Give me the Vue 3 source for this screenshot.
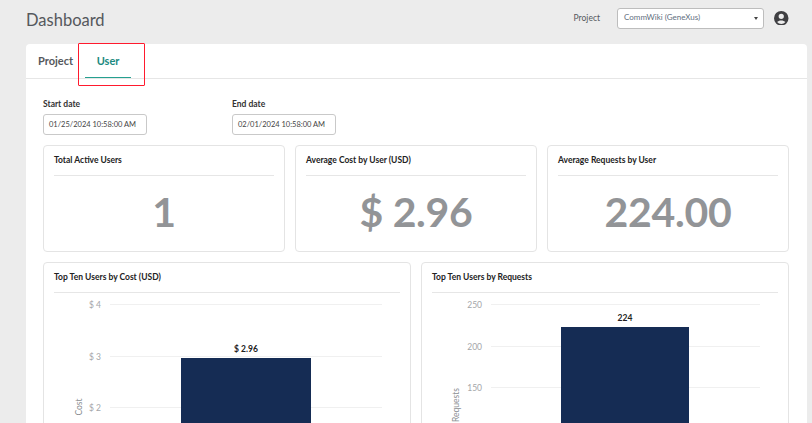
<script setup>
const stats = [
  { title: "Total Active Users", value: "1" },
  { title: "Average Cost by User (USD)", value: "$ 2.96" },
  { title: "Average Requests by User", value: "224.00" },
]

// coordinates are relative to the svg, which starts under the card's title line
const charts = [
  {
    title: "Top Ten Users by Cost (USD)",
    axis: "Cost",
    axisX: 28,
    axisY: 114,
    tickX: 47,
    gridFrom: 56,
    gridTo: 328,
    ticks: [
      { label: "$ 4", y: 11 },
      { label: "$ 3", y: 63 },
      { label: "$ 2", y: 114 },
    ],
    bar: { x: 127, y: 65, width: 130, label: "$ 2.96" },
  },
  {
    title: "Top Ten Users by Requests",
    axis: "Requests",
    axisX: 27,
    axisY: 112,
    tickX: 50,
    gridFrom: 59,
    gridTo: 328,
    ticks: [
      { label: "250", y: 11 },
      { label: "200", y: 53 },
      { label: "150", y: 94 },
    ],
    bar: { x: 129, y: 34, width: 128, label: "224" },
  },
]
</script>

<template>
  <div class="page">
    <header class="top-bar">
      <h1>Dashboard</h1>
      <div class="top-right">
        <label class="project-label">Project</label>
        <div class="project-select">
          <span>CommWiki (GeneXus)</span>
          <i class="caret"></i>
        </div>
        <svg class="user-icon" width="14.5" height="14.5" viewBox="0 0 16 16">
          <path
            fill="#3f3f42"
            fill-rule="evenodd"
            d="M8 0a8 8 0 1 1 0 16A8 8 0 0 1 8 0zm0 3a2.9 2.9 0 1 0 0 5.8A2.9 2.9 0 0 0 8 3zm0 7.4c-1.9 0-3.6.6-4.6 1.7a6 6 0 0 0 9.2 0c-1-1.1-2.7-1.7-4.6-1.7z"
          />
        </svg>
      </div>
    </header>

    <main class="panel">
      <nav class="tabs">
        <a class="tab">Project</a>
        <a class="tab active">User</a>
        <div class="highlight"></div>
      </nav>

      <div class="content">
        <div class="dates">
          <div class="date-field">
            <label>Start date</label>
            <div class="date-input">01/25/2024 10:58:00 AM</div>
          </div>
          <div class="date-field">
            <label>End date</label>
            <div class="date-input">02/01/2024 10:58:00 AM</div>
          </div>
        </div>

        <div class="stats">
          <section v-for="stat in stats" :key="stat.title" class="card stat-card">
            <h2>{{ stat.title }}</h2>
            <div class="stat-value">{{ stat.value }}</div>
          </section>
        </div>

        <div class="charts">
          <section v-for="chart in charts" :key="chart.title" class="card chart-card">
            <h2>{{ chart.title }}</h2>
            <svg class="chart" width="347" height="140">
              <g v-for="tick in chart.ticks" :key="tick.label">
                <line
                  :x1="chart.gridFrom"
                  :x2="chart.gridTo"
                  :y1="tick.y + 0.5"
                  :y2="tick.y + 0.5"
                  stroke="#f0f0f0"
                />
                <text class="tick" :x="chart.tickX" :y="tick.y + 3.5" text-anchor="end">
                  {{ tick.label }}
                </text>
              </g>
              <rect :x="chart.bar.x" :y="chart.bar.y" :width="chart.bar.width" height="100" fill="#152c54" />
              <text class="bar-label" :x="chart.bar.x + chart.bar.width / 2" :y="chart.bar.y - 6" text-anchor="middle">
                {{ chart.bar.label }}
              </text>
              <text
                class="axis-title"
                text-anchor="middle"
                :transform="`translate(${chart.axisX} ${chart.axisY}) rotate(-90)`"
              >
                {{ chart.axis }}
              </text>
            </svg>
          </section>
        </div>
      </div>
    </main>
  </div>
</template>

<style scoped>
.page {
  height: 423px;
  overflow: hidden;
  padding: 0 5px 0 26px;
  background: #ececec;
  font-family: Lato, "Noto Sans", sans-serif;
  color: #333;
  box-sizing: border-box;
}

.top-bar {
  display: flex;
  align-items: center;
  justify-content: space-between;
  height: 44px;
  padding-right: 18.5px;
  box-sizing: border-box;
}

.top-bar h1 {
  margin: 0 0 5px;
  font-size: 16.5px;
  font-weight: 400;
  color: #55585c;
}

.top-right {
  display: flex;
  align-items: center;
  padding-bottom: 8px;
}

.project-label {
  margin-right: 17px;
  font-size: 8.5px;
  color: #55585c;
}

.project-select {
  display: flex;
  align-items: center;
  justify-content: space-between;
  width: 147px;
  height: 21px;
  margin-right: 10px;
  padding: 0 5px 2px 6px;
  border: 1px solid #bdbdbd;
  border-radius: 3px;
  background: #fff;
  box-sizing: border-box;
  font-size: 8px;
  color: #5f6f80;
}

.caret {
  width: 0;
  height: 0;
  border-left: 2px solid transparent;
  border-right: 2px solid transparent;
  border-top: 3px solid #444;
  margin-top: 2px;
}

.panel {
  height: 400px;
  border-radius: 4px 4px 0 0;
  background: #fff;
}

.tabs {
  position: relative;
  display: flex;
  height: 35px;
  padding-left: 12px;
  border-bottom: 1px solid #e6e6e6;
  box-sizing: border-box;
}

.tab {
  display: flex;
  align-items: center;
  justify-content: center;
  height: 34px;
  padding-bottom: 1px;
  font-size: 11px;
  font-weight: 700;
  color: #55585c;
  box-sizing: border-box;
}

.tab.active {
  width: 46px;
  margin-left: 12px;
  padding-bottom: 0;
  color: #1b8a80;
  border-bottom: 1px solid #25a090;
}

.highlight {
  position: absolute;
  left: 52px;
  top: -1px;
  width: 67px;
  height: 43px;
  border: 1.5px solid #ff1a2e;
  border-radius: 1px;
  box-sizing: border-box;
}

.content {
  padding: 19px 18px 0 17px;
}

.dates {
  display: flex;
  gap: 85px;
}

.date-field label {
  display: block;
  height: 16px;
  font-size: 8.5px;
  font-weight: 700;
  line-height: 13px;
  color: #333;
}

.date-input {
  display: flex;
  align-items: center;
  width: 104px;
  height: 21px;
  padding-left: 5px;
  border: 1px solid #c9c9c9;
  border-radius: 3px;
  box-sizing: border-box;
  font-size: 7.5px;
  white-space: nowrap;
  color: #444;
}

.card {
  border: 1px solid #e4e4e4;
  border-radius: 4px;
  background: #fff;
  padding: 0 10px;
  box-sizing: border-box;
}

.card h2 {
  height: 30px;
  margin: 0;
  border-bottom: 1px solid #e6e6e6;
  font-size: 8.5px;
  font-weight: 700;
  line-height: 28px;
  color: #222;
  box-sizing: border-box;
}

.stats {
  display: grid;
  grid-template-columns: repeat(3, 242px);
  gap: 10px;
  margin-top: 10px;
}

.stat-card {
  height: 107px;
}

.stat-value {
  margin-top: 11px;
  text-align: center;
  font-size: 41px;
  font-weight: 700;
  letter-spacing: -0.3px;
  line-height: 50px;
  color: #929497;
}

.charts {
  display: grid;
  grid-template-columns: 368px 368px;
  gap: 10px;
  margin-top: 10px;
}

.chart-card {
  height: 170px;
}

.chart {
  display: block;
}

.tick {
  font-size: 8.5px;
  fill: #a4a6a9;
}

.bar-label {
  font-size: 8.5px;
  font-weight: 700;
  fill: #222;
}

.axis-title {
  font-size: 8.5px;
  fill: #8c8f93;
}
</style>

<style>
html,
body {
  margin: 0;
  overflow: hidden;
}
</style>
